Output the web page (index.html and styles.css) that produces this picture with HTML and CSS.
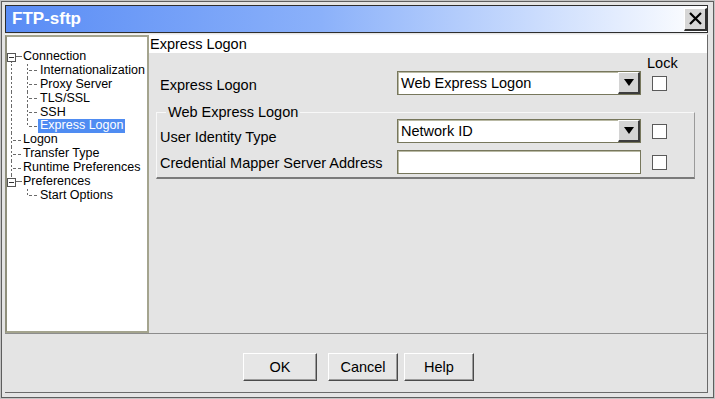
FILE: index.html
```html
<!DOCTYPE html>
<html>
<head>
<meta charset="utf-8">
<link rel="stylesheet" href="styles.css">
</head>
<body>
<div class="window">
  <div class="frame">
    <div class="titlebar">
      <span class="title">FTP-sftp</span>
      <span class="close"><svg width="15" height="15" viewBox="0 0 15 15"><path d="M2 2 L13 13 M13 2 L2 13" stroke="#000" stroke-width="2.2" fill="none"/></svg></span>
    </div>
    <div class="main">
      <div class="body">
        <div class="tree">
          <div class="row"><span class="ca boxtop"><span class="exp"></span></span><span class="t0">Connection</span></div>
          <div class="row"><span class="ca pipe"></span><span class="cb tee"></span><span class="t1">Internationalization</span></div>
          <div class="row"><span class="ca pipe"></span><span class="cb tee"></span><span class="t1">Proxy Server</span></div>
          <div class="row"><span class="ca pipe"></span><span class="cb tee"></span><span class="t1">TLS/SSL</span></div>
          <div class="row"><span class="ca pipe"></span><span class="cb tee"></span><span class="t1">SSH</span></div>
          <div class="row"><span class="ca pipe"></span><span class="cb elbow"></span><span class="t1 sel">Express Logon</span></div>
          <div class="row"><span class="ca tee"></span><span class="t0">Logon</span></div>
          <div class="row"><span class="ca tee"></span><span class="t0">Transfer Type</span></div>
          <div class="row"><span class="ca tee"></span><span class="t0">Runtime Preferences</span></div>
          <div class="row"><span class="ca boxend"><span class="exp"></span></span><span class="t0">Preferences</span></div>
          <div class="row"><span class="ca"></span><span class="cb elbow"></span><span class="t1">Start Options</span></div>
        </div>
        <div class="panel">
          <div class="panel-head">Express Logon</div>
          <div class="form">
            <div class="grid top">
              <span></span><span></span><span></span><span class="lock">Lock</span>
              <span class="label l1">Express Logon</span>
              <div class="select"><span class="val">Web Express Logon</span><span class="arrow"><svg width="10" height="7" viewBox="0 0 10 7"><path d="M0 0 H10 L5 7 Z" fill="#000"/></svg></span></div>
              <span></span><span class="chk"></span>
            </div>
            <fieldset class="group">
              <legend>Web Express Logon</legend>
              <div class="grid inner">
                <span class="label l2">User Identity Type</span>
                <div class="select"><span class="val">Network ID</span><span class="arrow"><svg width="10" height="7" viewBox="0 0 10 7"><path d="M0 0 H10 L5 7 Z" fill="#000"/></svg></span></div>
                <span></span><span class="chk"></span>
                <span class="label l3">Credential Mapper Server Address</span>
                <div class="input"></div>
                <span></span><span class="chk"></span>
              </div>
            </fieldset>
          </div>
        </div>
      </div>
      <div class="footer">
        <span class="btn ok">OK</span>
        <span class="btn cancel">Cancel</span>
        <span class="btn help">Help</span>
      </div>
    </div>
  </div>
</div>
</body>
</html>
```
FILE: styles.css
```css
html, body {
  margin: 0;
  padding: 0;
}
body {
  background: #e4e4e4;
  font-family: "Liberation Sans", Arial, sans-serif;
  color: #000;
}
.window {
  width: 715px;
  height: 399px;
  box-sizing: border-box;
  border: 1px solid #c4c4c4;
  background: #e4e4e4;
}
.frame {
  height: 100%;
  box-sizing: border-box;
  border: 1px solid #5e5e5e;
  padding: 3px 5px 4px 3px;
}
.titlebar {
  height: 28px;
  box-sizing: border-box;
  border: 1px solid #2e2e2e;
  background: linear-gradient(to right, #598cf5 0%, #8bb1fa 45%, #c9dbfd 75%, #ffffff 100%);
  display: flex;
  align-items: center;
  justify-content: space-between;
  padding-left: 6px;
}
.title {
  color: #fff;
  font-weight: bold;
  font-size: 17px;
  line-height: 20px;
}
.close {
  width: 23px;
  height: 23px;
  box-sizing: border-box;
  background: #d6d6d6;
  border-style: solid;
  border-color: #ffffff #303030 #303030 #ffffff;
  border-width: 1px 2px 2px 1px;
  display: flex;
  align-items: center;
  justify-content: center;
}
.main {
  margin-top: 1px;
  border-top: 1px solid #f4f4f4;
  border-right: 1px solid #6a6a6a;
  border-bottom: 1px solid #6a6a6a;
}
.body {
  display: flex;
  height: 298px;
  border-bottom: 1px solid #8c8c8c;
}
.tree {
  width: 144px;
  flex: none;
  box-sizing: border-box;
  background: #fff;
  border: 2px solid #a4a48e;
  border-left-color: #8f8f7c;
  padding-top: 13px;
  font-size: 12.5px;
}
.row {
  display: flex;
  align-items: center;
  height: 13.9px;
  line-height: 13.9px;
  white-space: nowrap;
}
.ca {
  width: 15px;
  height: 100%;
  flex: none;
  display: flex;
  align-items: center;
}
.cb {
  width: 16px;
  height: 100%;
  flex: none;
}
.ca.pipe {
  background: repeating-linear-gradient(to bottom, #6a6a6a 0 2px, transparent 2px 4px) 4px 0 / 1px 100% no-repeat;
}
.ca.tee {
  background:
    repeating-linear-gradient(to bottom, #6a6a6a 0 2px, transparent 2px 4px) 4px 0 / 1px 100% no-repeat,
    repeating-linear-gradient(to right, #6a6a6a 0 3px, transparent 3px 5px) 6px 50% / 9px 1px no-repeat;
}
.ca.boxtop {
  background:
    repeating-linear-gradient(to bottom, #6a6a6a 0 2px, transparent 2px 4px) 4px 100% / 1px 50% no-repeat,
    linear-gradient(#6a6a6a, #6a6a6a) 9px 50% / 6px 1px no-repeat;
}
.ca.boxend {
  background:
    repeating-linear-gradient(to bottom, #6a6a6a 0 2px, transparent 2px 4px) 4px 0 / 1px 50% no-repeat,
    linear-gradient(#6a6a6a, #6a6a6a) 9px 50% / 6px 1px no-repeat;
}
.cb.tee {
  background:
    repeating-linear-gradient(to bottom, #6a6a6a 0 2px, transparent 2px 4px) 5px 0 / 1px 100% no-repeat,
    repeating-linear-gradient(to right, #6a6a6a 0 3px, transparent 3px 5px) 7px 50% / 9px 1px no-repeat;
}
.cb.elbow {
  background:
    repeating-linear-gradient(to bottom, #6a6a6a 0 2px, transparent 2px 4px) 5px 0 / 1px 50% no-repeat,
    repeating-linear-gradient(to right, #6a6a6a 0 3px, transparent 3px 5px) 7px 50% / 9px 1px no-repeat;
}
.exp {
  width: 9px;
  height: 9px;
  box-sizing: border-box;
  border: 1px solid #555;
  background: #fff linear-gradient(#333, #333) center / 5px 1px no-repeat;
  margin-top: 1px;
}
.t0 {
  padding-left: 1px;
}
.t1 {
  padding: 0 2px;
}
.t1.sel {
  background: #4f8cf2;
  color: #fff;
}
.panel {
  flex: 1;
  display: flex;
  flex-direction: column;
  font-size: 14.5px;
}
.panel-head {
  height: 18px;
  line-height: 18px;
  background: #fff;
  padding-left: 1px;
}
.form {
  padding-left: 7px;
}
.grid {
  display: grid;
  grid-template-columns: 237px 244px 6px 30px;
  align-items: center;
}
.grid.top {
  margin-left: 4px;
  margin-top: 1px;
  grid-template-rows: 16px 24px;
  row-gap: 1px;
}
.lock {
  text-align: center;
  line-height: 16px;
  margin-top: 1px;
}
.label {
  white-space: nowrap;
}
.label.l1 {
  padding-top: 4px;
}
.label.l2 {
  padding-top: 12px;
}
.label.l3 {
  padding-top: 2px;
}
.select {
  display: flex;
  height: 24px;
  box-sizing: border-box;
  border: 1px solid #77775c;
  box-shadow: inset 1px 1px 0 #b9b9a4;
  background: #fff;
}
.select .val {
  flex: 1;
  line-height: 22px;
  padding-left: 3px;
}
.select .arrow {
  width: 22px;
  box-sizing: border-box;
  background: #d4d4d4;
  border-style: solid;
  border-color: #ffffff #3c3c3c #3c3c3c #ffffff;
  border-width: 1px 2px 2px 1px;
  display: flex;
  align-items: center;
  justify-content: center;
}
.input {
  height: 24px;
  box-sizing: border-box;
  border: 1px solid #77775c;
  box-shadow: inset 1px 1px 0 #b9b9a4;
  background: #fff;
}
.chk {
  width: 15px;
  height: 15px;
  box-sizing: border-box;
  border: 1px solid #5a5a5a;
  background: #fff;
  margin-left: 5px;
}
.group {
  width: 539px;
  box-sizing: border-box;
  margin: 9px 0 0 0;
  padding: 0 0 3px 3px;
  border-style: solid;
  border-width: 1px 1px 2px 1px;
  border-color: #f8f8f8 #9a9a9a #7a7a7a #f8f8f8;
  min-width: 0;
}
.group legend {
  padding: 0 2px;
  margin-left: 6px;
  line-height: 16px;
}
.grid.inner {
  margin-top: -1px;
  grid-template-rows: 24px 24px;
  row-gap: 7px;
}
.footer {
  height: 58px;
  box-sizing: border-box;
  padding: 19px 0 0 5px;
  display: flex;
  justify-content: center;
  align-items: flex-start;
  font-size: 14.5px;
}
.btn {
  height: 28px;
  box-sizing: border-box;
  background: #e6e6e6;
  border: 1px solid;
  border-color: #ffffff #4a4a4a #4a4a4a #ffffff;
  box-shadow: inset -1px -1px 0 #9c9c9c;
  display: flex;
  align-items: center;
  justify-content: center;
}
.ok {
  width: 74px;
  margin-right: 11px;
}
.cancel {
  width: 70px;
  margin-right: 6px;
}
.help {
  width: 70px;
}
```
